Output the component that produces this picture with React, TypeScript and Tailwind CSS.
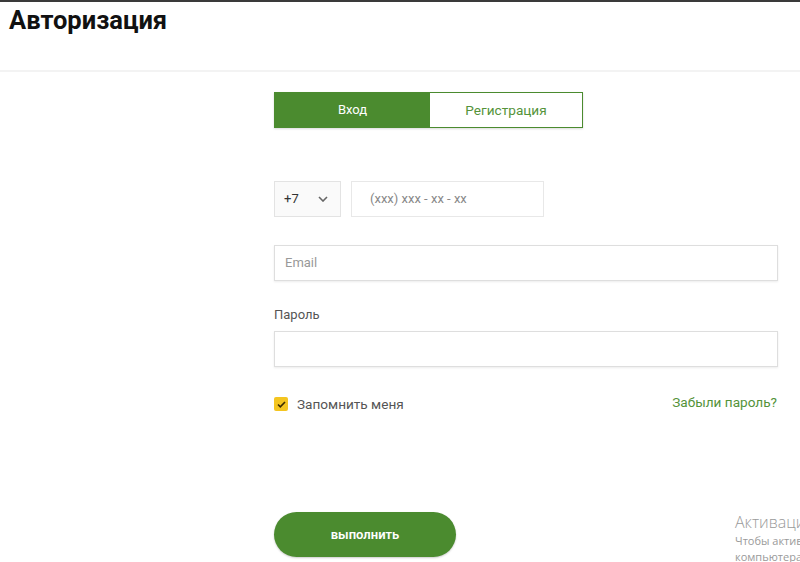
import React from "react";

export default function App() {
  return (
    <div className="relative w-[800px] h-[562px] overflow-hidden bg-white" style={{ fontFamily: "Roboto, 'Noto Sans', sans-serif" }}>
      <div className="h-[2px] bg-[#3a3a3a]" />
      <header className="h-[70px] border-b-2 border-[#f3f3f3] px-[9px] pt-[3px]">
        <h1 className="text-[25.5px] font-bold leading-[30px] text-[#111]">Авторизация</h1>
      </header>

      <main className="ml-[274px] w-[504px] pt-[20px]">
        <div className="flex w-[309px] h-[36px] border border-[#4b8b2f] shadow-[0_1px_2px_rgba(0,0,0,0.15)]">
          <button className="w-[155px] bg-[#4b8b2f] text-white text-[13px]">Вход</button>
          <button className="flex-1 bg-white text-[#54933a] text-[13.6px]">Регистрация</button>
        </div>

        <div className="mt-[53px] flex gap-[10px]">
          <div className="w-[67px] h-[36px] border border-[#e3e3e3] bg-[#fafafa] flex items-center justify-between pl-[9px] pr-[12px] text-[13px] text-[#333]">
            <span>+7</span>
            <svg width="10" height="6" viewBox="0 0 10 6" fill="none" stroke="#666" strokeWidth="1.6">
              <path d="M1 1l4 4 4-4" />
            </svg>
          </div>
          <div className="w-[193px] h-[36px] border border-[#e8e8e8] flex items-center pl-[18px] text-[13px] text-[#888]">
            (xxx) xxx - xx - xx
          </div>
        </div>

        <div className="mt-[28px] h-[36px] border border-[#dedede] shadow-[0_1px_2px_rgba(0,0,0,0.08)] flex items-center pl-[10px] text-[13px] text-[#999]">
          Email
        </div>

        <div className="mt-[25px] text-[13px] text-[#555] leading-[17px]">Пароль</div>
        <div className="mt-[8px] h-[36px] border border-[#dedede] shadow-[0_1px_2px_rgba(0,0,0,0.08)]" />

        <div className="mt-[23px] flex items-center justify-between">
          <label className="flex items-center gap-[9px] mt-[4px]">
            <span className="w-[14px] h-[14px] rounded-[2px] bg-[#f4c520] flex items-center justify-center">
              <svg width="9" height="7" viewBox="0 0 9 7" fill="none" stroke="#3a2a00" strokeWidth="1.6">
                <path d="M1 3.5l2.3 2.3L8 1" />
              </svg>
            </span>
            <span className="text-[13.6px] text-[#555]">Запомнить меня</span>
          </label>
          <a className="text-[13.6px] text-[#54933a] mr-[1px]">Забыли пароль?</a>
        </div>

        <button className="mt-[98px] w-[182px] h-[45px] rounded-full bg-[#4b8b2f] text-white text-[13px] font-semibold shadow-[0_1px_2px_rgba(0,0,0,0.2)]">
          выполнить
        </button>
      </main>

      <div className="absolute left-[735px] top-[511px] whitespace-nowrap text-[#9a9a9a]" style={{ fontFamily: "'Open Sans', 'Noto Sans', sans-serif" }}>
        <div className="text-[16px] leading-[22px] font-light">Активация Windows</div>
        <div className="text-[11px] leading-[16px]">Чтобы активировать Windows, перейдите в раздел</div>
        <div className="text-[11px] leading-[16px]">компьютера</div>
      </div>
    </div>
  );
}
